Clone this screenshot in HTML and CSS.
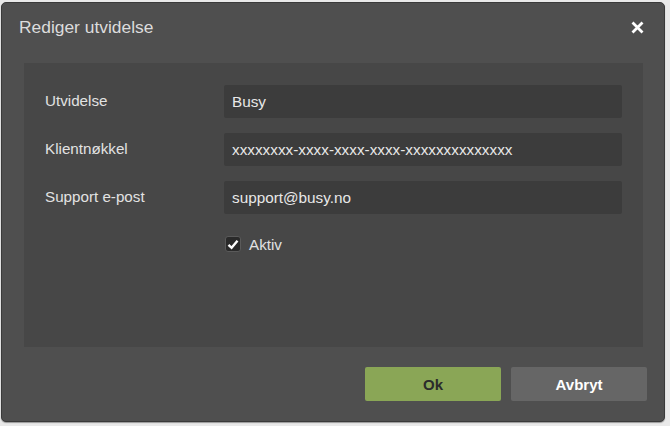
FILE: index.html
```html
<!DOCTYPE html>
<html lang="no">
<head>
<meta charset="utf-8">
<link rel="stylesheet" href="styles.css">
</head>
<body>
<div class="dialog">
  <div class="header">
    <span class="title">Rediger utvidelse</span>
    <span class="close"><svg width="13" height="13" viewBox="0 0 13 13"><path d="M1.5 1.5 L11.5 11.5 M11.5 1.5 L1.5 11.5" stroke="#fff" stroke-width="2.8" stroke-linecap="butt"/></svg></span>
  </div>
  <div class="panel">
    <div class="row"><label class="lbl">Utvidelse</label><div class="input">Busy</div></div>
    <div class="row"><label class="lbl">Klientnøkkel</label><div class="input">xxxxxxxx-xxxx-xxxx-xxxx-xxxxxxxxxxxxxx</div></div>
    <div class="row"><label class="lbl">Support e-post</label><div class="input">support@busy.no</div></div>
    <div class="row"><span class="lbl"></span><div class="check"><span class="box"><svg width="12" height="11" viewBox="0 0 12 11"><path d="M1.5 5.8 L4.6 8.8 L10.5 1.8" fill="none" stroke="#fff" stroke-width="2.4"/></svg></span><span class="check-text">Aktiv</span></div></div>
  </div>
  <div class="footer">
    <button class="btn ok">Ok</button>
    <button class="btn cancel">Avbryt</button>
  </div>
</div>
</body>
</html>
```
FILE: styles.css
```css
html, body { margin: 0; padding: 0; }
body {
  background: #e9e9e9;
  font-family: "Liberation Sans", Arial, sans-serif;
  width: 670px;
  height: 426px;
  overflow: hidden;
}
.dialog {
  box-sizing: border-box;
  margin: 2px 0 0 1px;
  width: 664px;
  height: 420px;
  background: #4f4f4f;
  border: 1px solid #3a3a3a;
  border-radius: 5px;
  box-shadow: 0 1px 1px rgba(0,0,0,0.35);
  display: flex;
  flex-direction: column;
}
.header {
  height: 60px;
  display: flex;
  align-items: center;
  justify-content: space-between;
  padding: 0 20px 12px 17px;
  box-sizing: border-box;
}
.title {
  color: #dcdcdc;
  font-size: 17.4px;
}
.close { display: flex; }
.panel {
  margin: 0 21px 0 22px;
  height: 284px;
  box-sizing: border-box;
  background: #474747;
  padding: 22px 21px 0 21px;
  display: flex;
  flex-direction: column;
  gap: 15px;
}
.row {
  display: flex;
  align-items: center;
  height: 33px;
}
.lbl {
  width: 179px;
  flex: none;
  color: #e2e2e2;
  font-size: 15.2px;
  margin-top: -3px;
}
.input {
  flex: 1;
  height: 33px;
  box-sizing: border-box;
  background: #3c3c3c;
  border-radius: 2px;
  color: #e8e8e8;
  font-size: 15.3px;
  padding: 0 8px;
  display: flex;
  align-items: center;
}
.check {
  display: flex;
  align-items: center;
  gap: 8px;
  margin-top: -3px;
  margin-left: 1px;
}
.box {
  width: 16px;
  height: 16px;
  box-sizing: border-box;
  border: 1px solid #5a5a5a;
  background: #2a2a2a;
  border-radius: 3px;
  display: flex;
  align-items: center;
  justify-content: center;
}
.check-text {
  color: #e2e2e2;
  font-size: 15.2px;
}
.footer {
  display: flex;
  justify-content: flex-end;
  gap: 10px;
  padding: 20px 17px 0 0;
}
.btn {
  width: 136px;
  height: 34px;
  border: none;
  border-radius: 2px;
  font-family: "Liberation Sans", Arial, sans-serif;
  font-weight: bold;
  font-size: 15px;
  padding: 0;
}
.ok { background: #8aa656; color: #2b2b2b; }
.cancel { background: #666666; color: #ffffff; }
```
